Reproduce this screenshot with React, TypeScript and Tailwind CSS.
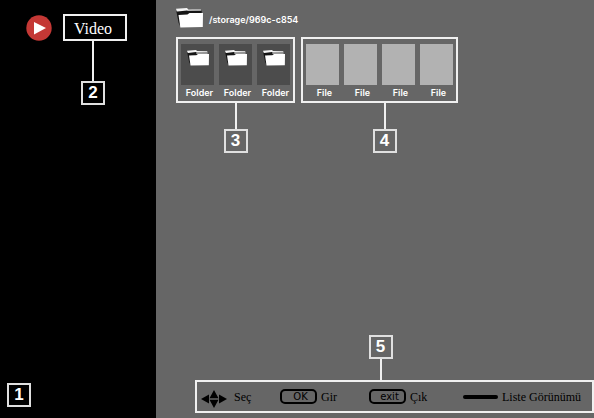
import type { ReactNode } from "react";

function Marker({ children }: { children: ReactNode }) {
  return (
    <span className="flex size-6 items-center justify-center border-2 border-[#e0e0e0] font-['Liberation_Sans',sans-serif] text-[17px] leading-5 font-bold text-white">
      {children}
    </span>
  );
}

function FolderIcon({ className, lining }: { className: string; lining: string }) {
  return (
    <svg viewBox="0 0 26 20" className={className} preserveAspectRatio="none" aria-hidden="true">
      <path d="M0 1.5 L11 1.5 L24.5 3 V7 H5 L4 18 L2.5 15 Z" fill="#151515" />
      <path d="M11 2.6 H24.5 V5 H11 Z" fill={lining} />
      <path d="M0 0.8 L10.5 0 L12 1.4 L24 1.6 V2.6 L11.5 2.8 L10.5 2.6 L1.5 3.6 L0.6 3.2 Z" fill="#f4f4f4" />
      <path d="M2.4 7 L11 6.6 L13 5 L26 5 L25.8 19 L4.2 19.4 Z" fill="#fff" />
    </svg>
  );
}

function Tile({ kind }: { kind: "Folder" | "File" }) {
  return (
    <button type="button" className="flex w-[33px] flex-col items-center">
      <span
        className={
          kind === "Folder"
            ? "flex h-[41px] w-full justify-center bg-[#4c4c4c] pt-1.5"
            : "h-[41px] w-full bg-[#b2b2b2]"
        }
      >
        {kind === "Folder" && <FolderIcon className="h-4 w-[22px]" lining="#999" />}
      </span>
      <span className="pt-0.5 pl-1 font-['Inter',sans-serif] text-[9px] leading-3 font-semibold text-white">{kind}</span>
    </button>
  );
}

function Group({ children }: { children: ReactNode }) {
  return (
    <div className="flex h-[66px] gap-[5px] border-2 border-[#f0f0f0] px-[3px] pt-[5px]">{children}</div>
  );
}

function Pointer({ children }: { children: ReactNode }) {
  return (
    <div className="flex flex-col items-center">
      <span className="h-[26px] w-0.5 bg-[#f0f0f0]" />
      <Marker>{children}</Marker>
    </div>
  );
}

function Key({ children }: { children: ReactNode }) {
  return (
    <span className="flex h-[15px] w-[37px] items-center justify-center rounded-[5px] border-2 border-black pl-1 font-['DejaVu_Sans',sans-serif] text-[10px] leading-3">
      {children}
    </span>
  );
}

export default function App() {
  return (
    <div className="flex min-h-screen bg-[#666]">
      <aside className="flex w-[156px] shrink-0 flex-col justify-between bg-black pt-3.5 pb-[11px]">
        <nav className="flex items-start gap-[11px] pl-[26px]">
          <svg viewBox="0 0 26 26" className="mt-px size-[26px]" aria-hidden="true">
            <circle cx="13" cy="13" r="12.7" fill="#c43835" />
            <path d="M8 7 L20 13 L8 19.5 Z" fill="#fff" />
          </svg>
          <div className="flex flex-col items-center">
            <button
              type="button"
              className="h-[27px] w-16 border-2 border-[#f0f0f0] pt-0.5 pr-1 font-['Liberation_Serif',serif] text-base leading-5 text-white"
            >
              Video
            </button>
            <span className="mr-1 h-10 w-0.5 bg-[#f0f0f0]" />
            <div className="mr-1">
              <Marker>2</Marker>
            </div>
          </div>
        </nav>
        <div className="pl-[7px]">
          <Marker>1</Marker>
        </div>
      </aside>

      <main className="flex grow flex-col justify-between pt-2 pb-[5px]">
        <section className="pl-5">
          <header className="flex items-center gap-1.5">
            <FolderIcon className="h-5 w-[27px]" lining="#151515" />
            <h1 className="pt-1 font-['Inter',sans-serif] text-[9px] leading-3 font-semibold text-white">
              /storage/969c-c854
            </h1>
          </header>
          <div className="flex gap-1.5 pt-[9px]">
            <div>
              <Group>
                <Tile kind="Folder" />
                <Tile kind="Folder" />
                <Tile kind="Folder" />
              </Group>
              <Pointer>3</Pointer>
            </div>
            <div>
              <Group>
                <Tile kind="File" />
                <Tile kind="File" />
                <Tile kind="File" />
                <Tile kind="File" />
              </Group>
              <div className="pl-2.5">
                <Pointer>4</Pointer>
              </div>
            </div>
          </div>
        </section>

        <footer className="flex flex-col items-center pl-[39px]">
          <div className="flex flex-col items-center pr-7">
            <Marker>5</Marker>
            <span className="h-[21px] w-0.5 bg-[#f0f0f0]" />
          </div>
          <div className="grid h-[33px] w-full grid-cols-[79px_89px_94px_auto] items-center border-2 border-[#f0f0f0] pl-1 font-['Liberation_Serif',serif] text-xs text-black">
            <button type="button" className="flex items-center gap-[7px]">
              <svg viewBox="0 0 26 18" className="mt-1 h-[18px] w-[26px]" aria-hidden="true">
                <path d="M0 9 L8 4.5 V13.5 Z M26 9 L18 4.5 V13.5 Z M13 0 L17.5 8.3 H8.5 Z M13 18 L17.5 9.7 H8.5 Z" />
              </svg>
              Seç
            </button>
            <button type="button" className="flex items-center gap-1">
              <Key>OK</Key>
              Gir
            </button>
            <button type="button" className="flex items-center gap-1">
              <Key>exit</Key>
              Çık
            </button>
            <button type="button" className="flex items-center gap-1">
              <span className="h-1 w-[35px] rounded-full bg-black" />
              Liste Görünümü
            </button>
          </div>
        </footer>
      </main>
    </div>
  );
}
